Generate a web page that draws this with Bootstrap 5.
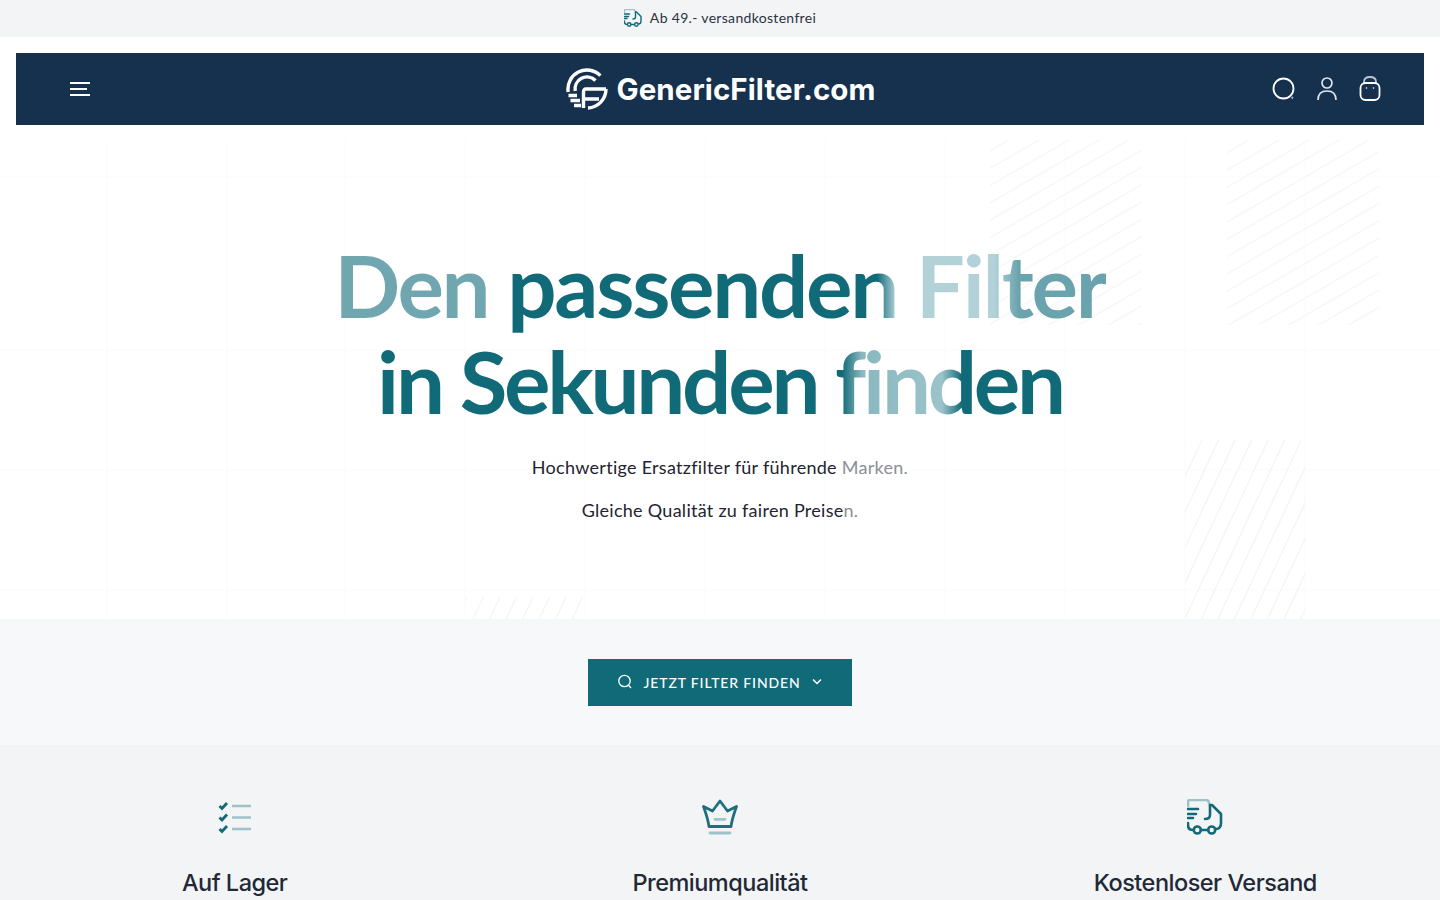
<!DOCTYPE html>
<html lang="de">
<head>
  <meta charset="UTF-8">
  <title>GenericFilter.com</title>
  <meta name="viewport" content="width=device-width, initial-scale=1">
  <link href="https://cdn.jsdelivr.net/npm/bootstrap@5.3.3/dist/css/bootstrap.min.css" rel="stylesheet">
  <style>
    body { font-family: "Lato", "Liberation Sans", sans-serif; color: #1f2430; background: #fff; overflow: hidden; height: 900px; }
    .promo-bar { height: 37px; background: #f3f4f6; font-size: 14px; letter-spacing: .32px; color: #2b3340; padding-bottom: 2px; }
    .main-header { height: 72px; margin: 16px 16px 0; background: #15314e; padding: 0 42px 0 54px; }
    .header-side { flex: 1 1 0; }
    .brand-box { margin-right: 10px; }
    .brand-name { font-family: "Inter", sans-serif; font-weight: 700; font-size: 29.5px; color: #fff; letter-spacing: .1px; }
    .header-tools { gap: 20px; }
    .hero-area { height: 494px; position: relative; }
    .hero-pattern { position: absolute; top: 0; left: 0; width: 100%; height: 100%; }
    .hero-inner { position: relative; padding-top: 112px; }
    .hero-title { font-size: 87px; line-height: 96px; font-weight: 700; margin: 0 0 25px; }
    .hero-line { display: inline-block; color: transparent; -webkit-background-clip: text; background-clip: text; }
    .line-one { letter-spacing: -2.3px; background-image: linear-gradient(90deg, #70a6b0 0, #70a6b0 160px, #116a77 165px, #116a77 543px, #b3d2d8 562px, #b3d2d8 660px, #6aa3ad 685px, #6aa3ad 100%); }
    .line-two { letter-spacing: -3.25px; background-image: linear-gradient(90deg, #116a77 0, #116a77 465px, #8ab8c0 485px, #9cc3ca 565px, #116a77 585px, #116a77 100%); }
    .hero-copy { font-size: 18px; line-height: 27px; margin-bottom: 16px; letter-spacing: .28px; }
    .copy-fade { color: #8c8f96; }
    .cta-band { height: 126px; background: #f7f8fa; }
    .cta-button { width: 264px; height: 47px; background: #116a77; color: #fff; border: 0; border-radius: 0; font-size: 14px; letter-spacing: .85px; font-weight: 500; gap: 11px; }
    .cta-button:hover { background: #116a77; color: #fff; }
    .feature-band { background: #f3f4f6; height: 155px; padding: 0 16px; }
    .feature-icon { display: block; height: 36px; margin: 54px auto 0; }
    .feature-title { font-family: "Inter", sans-serif; font-size: 23.5px; font-weight: 500; color: #1f2937; margin: 32px 0 0; line-height: 32px; letter-spacing: -.5px; }
  </style>
</head>
<body>
  <div class="promo-bar d-flex align-items-center justify-content-center gap-2">
    <svg width="18" height="18" viewBox="0 0 36 36" fill="none" stroke="#116a77" stroke-width="2.800" stroke-linecap="round" stroke-linejoin="round">
      <path d="M1 7V3Q1 1 3 1H19Q22 1 22 4" stroke="#9cc3ca"/>
      <path d="M1 10H11M1 15H9M1 19H6"/>
      <path d="M23 6V16Q23 20 18 20"/>
      <path d="M23 6H25L34 15V24Q34 30 29 30"/>
      <circle cx="10.300" cy="31" r="3.500"/><circle cx="24.700" cy="31" r="3.500"/>
      <path d="M1 24V26Q1 31 6 31M14 31H21"/>
    </svg>
    <span>Ab 49.- versandkostenfrei</span>
  </div>

  <header class="main-header d-flex align-items-center">
    <div class="header-side d-flex">
      <svg width="20" height="14" viewBox="0 0 20 14" stroke="#fff" stroke-width="2" fill="none">
        <path d="M0 1H20M0 7H17M0 13H20"/>
      </svg>
    </div>
    <div class="brand-box d-flex align-items-center gap-2">
      <svg width="42" height="42" viewBox="0 0 42 42" fill="none" stroke="#fff" stroke-width="3.400">
        <path d="M34.400 7.600A19 19 0 0 0 2.200 24"/>
        <path d="M29.500 12.500A12 12 0 0 0 9.200 23"/>
        <path d="M2.500 27.500H11M4.500 32.500H14M8 37.500H15"/>
        <path d="M40 21A19 19 0 0 1 22 40"/>
        <path d="M40 21H20Q17.500 21 17.500 24V40M17.500 31H33"/>
      </svg>
      <span class="brand-name">GenericFilter.com</span>
    </div>
    <div class="header-side d-flex align-items-center justify-content-end header-tools">
      <svg width="24" height="24" viewBox="0 0 24 24" fill="none" stroke="#fff" stroke-width="1.800"><circle cx="11.500" cy="11.500" r="10"/><path d="M19.500 20L21 21.500" stroke="#9fb0c0"/></svg>
      <svg width="22" height="26" viewBox="0 0 22 26" fill="none" stroke="#dfe6ec" stroke-width="1.700"><circle cx="11" cy="7" r="5"/><path d="M2 24Q2 15 11 15T20 24"/></svg>
      <svg width="24" height="26" viewBox="0 0 24 26" fill="none" stroke="#fff" stroke-width="1.800"><path d="M6 8V6Q6 1 12 1T18 6V8" stroke="#b9c6d2"/><rect x="2.500" y="7" width="19" height="17" rx="5"/><circle cx="8.500" cy="12" r=".8" fill="#fff" stroke="none"/><circle cx="15.500" cy="12" r=".8" fill="#fff" stroke="none"/></svg>
    </div>
  </header>

  <section class="hero-area">
    <svg class="hero-pattern" viewBox="0 0 1440 494" fill="none">
      <defs>
        <pattern id="hatchFlat" width="20" height="15" patternUnits="userSpaceOnUse" patternTransform="rotate(-30)">
          <path d="M0 7.500H20" stroke="#f4f5f5" stroke-width="1.300"/>
        </pattern>
        <pattern id="hatchSteep" width="15" height="20" patternUnits="userSpaceOnUse" patternTransform="rotate(25)">
          <path d="M7.500 0V20" stroke="#f2f3f3" stroke-width="1.300"/>
        </pattern>
      </defs>
      <path d="M107 15V494M227 15V494M345 15V494M465 15V494M585 15V494M705 15V494M825 15V494M945 15V494M1065 15V494M1185 15V494M1305 15V494M0 52H1440M0 225H1440M0 345H1440M0 465H1440" stroke="#fbfbfb"/>
      <rect x="990" y="15" width="152" height="185" fill="url(#hatchFlat)"/>
      <rect x="1227" y="15" width="152" height="185" fill="url(#hatchFlat)"/>
      <rect x="1185" y="315" width="120" height="179" fill="url(#hatchSteep)"/>
      <rect x="465" y="472" width="120" height="22" fill="url(#hatchSteep)"/>
    </svg>
    <div class="hero-inner text-center">
      <h1 class="hero-title">
        <span class="hero-line line-one">Den passenden Filter</span><br>
        <span class="hero-line line-two">in Sekunden finden</span>
      </h1>
      <p class="hero-copy">Hochwertige Ersatzfilter für führende <span class="copy-fade">Marken.</span></p>
      <p class="hero-copy">Gleiche Qualität zu fairen Preise<span class="copy-fade">n.</span></p>
    </div>
  </section>

  <section class="cta-band d-flex align-items-center justify-content-center">
    <button type="button" class="btn cta-button d-flex align-items-center justify-content-center">
      <svg width="16" height="16" viewBox="0 0 16 16" fill="none" stroke="#fff" stroke-width="1.300"><circle cx="7.500" cy="7" r="5.700"/><path d="M11.500 11.200L14 14"/></svg>
      <span>JETZT FILTER FINDEN</span>
      <svg width="12" height="8" viewBox="0 0 12 8" fill="none" stroke="#fff" stroke-width="1.500"><path d="M2 1.500L6 5.500L10 1.500"/></svg>
    </button>
  </section>

  <section class="feature-band">
    <div class="row gx-5 text-center">
      <div class="col-4">
        <svg class="feature-icon" width="36" height="36" viewBox="0 0 36 36" fill="none" stroke="#116a77" stroke-width="2.800">
          <path d="M2.500 7L5 9.500L10 4M2.500 18.500L5 21L10 15.500M2.500 30L5 32.500L10 27"/>
          <path d="M15 7H34M15 18.500H34M15 30H34" stroke="#9cc3ca" stroke-width="2.400"/>
        </svg>
        <h3 class="feature-title">Auf Lager</h3>
      </div>
      <div class="col-4">
        <svg class="feature-icon" width="36" height="36" viewBox="0 0 36 36" fill="none" stroke="#1f6f7c" stroke-width="2.800" stroke-linejoin="round" stroke-linecap="round">
          <path d="M18 2L25.500 12L34.500 7.500Q30 20 29 27.500H7Q6 20 1.500 7.500L10.500 12Z"/>
          <path d="M13 20.300H23M8 34H28" stroke="#9cc3ca"/>
        </svg>
        <h3 class="feature-title">Premiumqualität</h3>
      </div>
      <div class="col-4">
        <svg class="feature-icon" width="36" height="36" viewBox="0 0 36 36" fill="none" stroke="#116a77" stroke-width="2.600" stroke-linecap="round" stroke-linejoin="round">
          <path d="M1 7V3Q1 1 3 1H19Q22 1 22 4" stroke="#9cc3ca"/>
          <path d="M1 10H11M1 15H9M1 19H6"/>
          <path d="M23 6V16Q23 20 18 20"/>
          <path d="M23 6H25L34 15V24Q34 30 29 30"/>
          <circle cx="10.300" cy="31" r="3.500"/><circle cx="24.700" cy="31" r="3.500"/>
          <path d="M1 24V26Q1 31 6 31M14 31H21"/>
        </svg>
        <h3 class="feature-title">Kostenloser Versand</h3>
      </div>
    </div>
  </section>
  <script src="https://cdn.jsdelivr.net/npm/bootstrap@5.3.3/dist/js/bootstrap.bundle.min.js"></script>
</body>
</html>
